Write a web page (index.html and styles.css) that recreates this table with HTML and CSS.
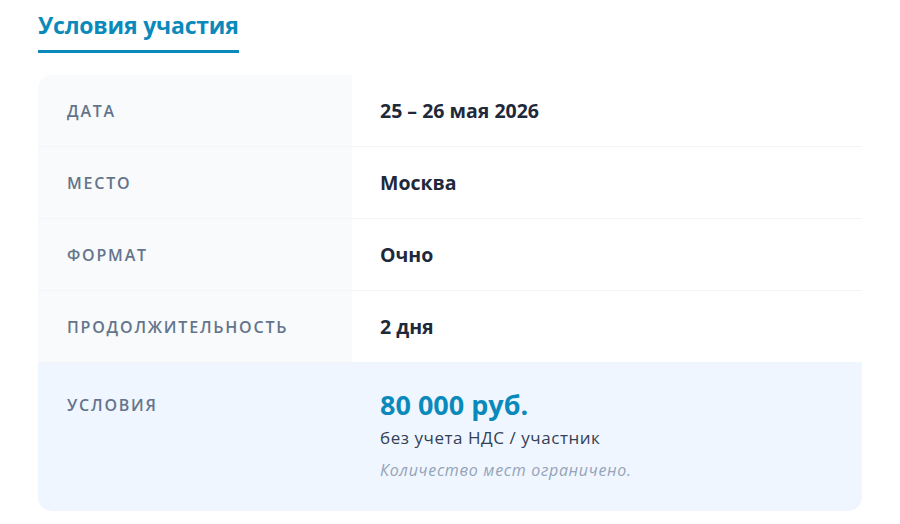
FILE: index.html
```html
<!DOCTYPE html>
<html lang="ru">
<head>
<meta charset="utf-8">
<link rel="stylesheet" href="styles.css">
</head>
<body>
<section class="wrap">
  <h2 class="title">Условия участия</h2>
  <div class="card">
    <div class="row">
      <div class="label">Дата</div>
      <div class="value">25 – 26 мая 2026</div>
    </div>
    <div class="row">
      <div class="label">Место</div>
      <div class="value">Москва</div>
    </div>
    <div class="row">
      <div class="label">Формат</div>
      <div class="value">Очно</div>
    </div>
    <div class="row">
      <div class="label">Продолжительность</div>
      <div class="value">2 дня</div>
    </div>
    <div class="row row-price">
      <div class="label">Условия</div>
      <div class="value">
        <div class="price">80 000 руб.</div>
        <div class="note">без учета НДС / участник</div>
        <div class="limit">Количество мест ограничено.</div>
      </div>
    </div>
  </div>
</section>
</body>
</html>
```
FILE: styles.css
```css
* { box-sizing: border-box; }
html, body { margin: 0; padding: 0; background: #fff; }
body { font-family: "Open Sans", "Noto Sans", sans-serif; color: #1e293b; }
.wrap { padding: 10px 38px 0 38px; width: 900px; }
.title {
  display: inline-block;
  margin: 0 0 22px 0;
  font-size: 23px;
  font-weight: 700;
  letter-spacing: -0.2px;
  line-height: 30px;
  color: #0a8abb;
  padding-bottom: 10px;
  border-bottom: 3px solid #0a8abb;
}
.card {
  width: 824px;
  border-radius: 14px;
  overflow: hidden;
}
.row {
  display: grid;
  grid-template-columns: 314px 1fr;
  border-bottom: 1px solid #f1f5f9;
}
.row .label {
  background: #f8fafc;
  padding: 26px 28px 25px 29px;
  font-size: 16px;
  font-weight: 600;
  letter-spacing: 1.8px;
  text-transform: uppercase;
  color: #64748b;
  line-height: 20px;
}
.row .value {
  padding: 26px 28px 25px 28px;
  font-size: 19.5px;
  font-weight: 700;
  line-height: 20px;
  color: #1e293b;
}
.row-price { background: #eff6ff; border-bottom: none; }
.row-price .label { background: transparent; padding-top: 32px; }
.row-price .value { padding-top: 26px; padding-bottom: 30px; }
.price { font-size: 27px; font-weight: 700; color: #0a8abb; line-height: 32px; }
.note { font-size: 17px; font-weight: 400; letter-spacing: 0.55px; color: #334155; line-height: 22px; margin-top: 6px; }
.limit { font-size: 16px; font-weight: 400; font-style: italic; letter-spacing: 0.7px; color: #94a3b8; line-height: 22px; margin-top: 10px; }
```
